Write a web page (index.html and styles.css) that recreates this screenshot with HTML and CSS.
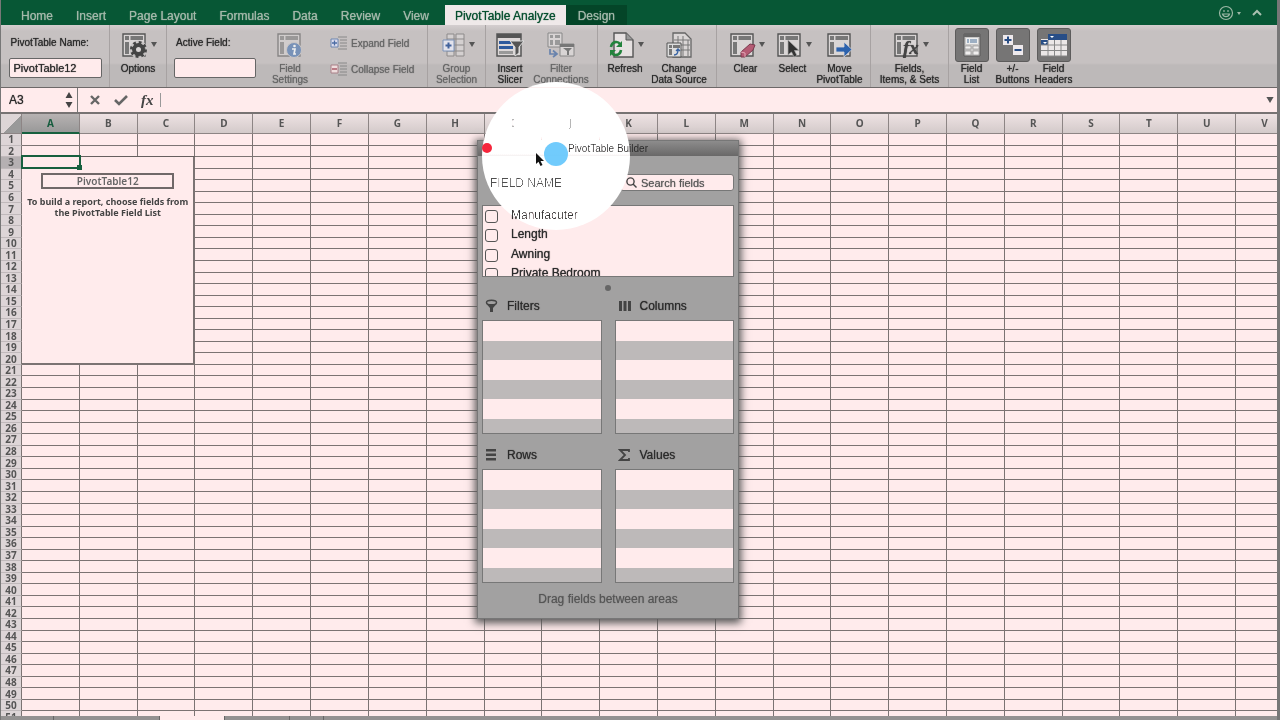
FILE: index.html
```html
<!DOCTYPE html>
<html lang="en">
<head>
<meta charset="utf-8">
<title>PivotTable Analyze</title>
<link rel="stylesheet" href="styles.css">
</head>
<body>
<svg class="defs" aria-hidden="true">
  <symbol id="grid" viewBox="0 0 24 26"><path d="M1 2h22v22H1z" fill="#d9d5d5" stroke="#555" stroke-width="1.4"/><path d="M3 4h4v4H3zM8.500 4H21v4H8.500zM3 10h4v12H3z" fill="#777"/></symbol>
  <symbol id="caret" viewBox="0 0 6 5"><path d="M0 0h6L3 5z" fill="#555"/></symbol>
</svg>
<div class="app">
  <header class="tabs">
    <nav class="tab-list">
      <a class="tab" href="#">Home</a><a class="tab" href="#">Insert</a><a class="tab" href="#">Page Layout</a><a class="tab" href="#">Formulas</a><a class="tab" href="#">Data</a><a class="tab" href="#">Review</a><a class="tab" href="#">View</a><a class="tab active" href="#">PivotTable Analyze</a><a class="tab design" href="#">Design</a>
    </nav>
    <div class="tab-tools">
      <button class="plain" aria-label="Feedback"><svg width="24" height="16" viewBox="0 0 24 16" fill="none" stroke="#9db8a6" stroke-width="1.2"><circle cx="8" cy="8" r="6.500"/><path d="M4.500 9c1 3.500 6 3.500 7 0z"/><path d="M6 5v2M10 5v2"/><path d="M19 7h4l-2 3z" fill="#9db8a6" stroke="none"/></svg></button>
      <button class="plain" aria-label="Collapse ribbon"><svg width="10" height="8" viewBox="0 0 10 8" fill="none" stroke="#a9c0b0" stroke-width="2"><path d="M1 6l4-4 4 4"/></svg></button>
    </div>
  </header>

  <section class="ribbon">
    <div class="group name-group">
      <div class="stack"><label for="ptname">PivotTable Name:</label><input id="ptname" value="PivotTable12"></div>
    </div>
    <div class="group options-group">
      <button class="tool"><span class="pic menu"><svg width="26" height="26" viewBox="0 0 26 26"><use href="#grid" width="24" height="26"/><circle cx="16.500" cy="17.500" r="8" fill="none" stroke="#c9c5c5" stroke-width="2"/><circle cx="16.500" cy="17.500" r="4.500" fill="#d9d5d5" stroke="#444" stroke-width="4"/><circle cx="16.500" cy="17.500" r="7" fill="none" stroke="#444" stroke-width="3" stroke-dasharray="2.700 2.800"/></svg><svg class="caret"><use href="#caret"/></svg></span><span>Options</span></button>
    </div>
    <div class="group field-group">
      <div class="stack"><label for="actfield">Active Field:</label><input id="actfield"></div>
      <button class="tool dim"><span class="pic"><svg width="26" height="26" viewBox="0 0 26 26"><g opacity=".55"><use href="#grid" width="24" height="26"/></g><circle cx="17" cy="18" r="7.500" fill="#7892b8" stroke="#c9c5c5"/><circle cx="17.500" cy="14" r="1.300" fill="#eee"/><path d="M15 17h3l-1 5h2" fill="none" stroke="#eee" stroke-width="1.700"/></svg></span><span>Field<br>Settings</span></button>
      <div class="mini-stack">
        <button class="mini"><svg width="18" height="16" viewBox="0 0 18 16"><path d="M8 2h9M10 5h7M10 8h7M10 11h7M8 14h9" stroke="#888"/><path d="M1 4h7v8H1z" fill="#dde" stroke="#6d86b0"/><path d="M4.500 5.500v5M2 8h5" stroke="#4b6ca4" stroke-width="1.300"/></svg>Expand Field</button>
        <button class="mini"><svg width="18" height="16" viewBox="0 0 18 16"><path d="M8 2h9M10 5h7M10 8h7M10 11h7M8 14h9" stroke="#888"/><path d="M1 4h7v8H1z" fill="#edd" stroke="#a98088"/><path d="M2 8h5" stroke="#a04455" stroke-width="1.300"/></svg>Collapse Field</button>
      </div>
    </div>
    <div class="group selection-group">
      <button class="tool dim"><span class="pic menu"><svg width="24" height="26" viewBox="0 0 24 26"><path d="M5 2h7v22H5zM14 2h8v22h-8zM5 7h17M5 13h17M5 19h17" fill="#d4d0d0" stroke="#8d8a8a"/><path d="M1 8h11v11H1z" fill="#e3e3ec" stroke="#7d93b8"/><path d="M6.500 10.500v6M3.500 13.500h6" stroke="#41629c" stroke-width="2"/></svg><svg class="caret"><use href="#caret"/></svg></span><span>Group<br>Selection</span></button>
    </div>
    <div class="group slicer-group">
      <button class="tool"><span class="pic"><svg width="28" height="26" viewBox="0 0 28 26"><path d="M1 2h24v22H1z" fill="#ddd8d8" stroke="#555" stroke-width="1.500"/><path d="M1 2h24v4H1z" fill="#555"/><path d="M3 9h12v3H3zM3 14h14v3H3z" fill="#2f5a9d"/><path d="M3 19h14v3H3z" fill="#999"/><path d="M14 9h14l-5 6v6l-4 3v-9z" fill="#555" stroke="#ddd"/></svg></span><span>Insert<br>Slicer</span></button>
      <button class="tool dim wide"><span class="pic"><svg width="28" height="26" viewBox="0 0 28 26"><path d="M1 1h14v14H1z" fill="#d8d4d4" stroke="#888"/><path d="M3 3h3v3H3zM8 3h5v3H8zM3 8h3v5H3zM8 8h5v5H8z" fill="#999"/><path d="M13 12h14v12H13z" fill="#d8d4d4" stroke="#888"/><path d="M13 12h14v3H13zM16 16h9l-3 3v4h-2v-4z" fill="#777"/><path d="M3 17v5h6M6 18.500l4 3.500-4 3" fill="none" stroke="#6983ad" stroke-width="1.700"/></svg></span><span>Filter<br>Connections</span></button>
    </div>
    <div class="group refresh-group">
      <button class="tool"><span class="pic menu"><svg width="26" height="26" viewBox="0 0 26 26"><path d="M5 1h12l7 7v17H5z" fill="#e6e1e1" stroke="#555" stroke-width="1.400"/><path d="M17 1v7h7" fill="#999" stroke="#555"/><path d="M2 15c1-6 7-6 9-3M12 18c-1 6-7 6-9 3" fill="none" stroke="#23833c" stroke-width="2.600"/><path d="M13 9v6H7zM1 24v-6h6z" fill="#23833c"/></svg><svg class="caret"><use href="#caret"/></svg></span><span>Refresh</span></button>
      <button class="tool wide"><span class="pic"><svg width="26" height="26" viewBox="0 0 26 26"><path d="M7 1h12l6 6v18H7z" fill="#dad6d6" stroke="#666" stroke-width="1.300"/><path d="M12 4v20M17 4v20M22 8v16M8 8h16M8 13h16M8 18h16" stroke="#777"/><path d="M1 11h14v14H1z" fill="#ddd" stroke="#555"/><path d="M3 13h3v3H3zM7 13h7v3H7zM3 17h3v6H3z" fill="#777"/><path d="M8 23q4 0 4-5M10 19l2-2 2 2" fill="none" stroke="#3661a2" stroke-width="1.400"/></svg></span><span>Change<br>Data Source</span></button>
    </div>
    <div class="group actions-group">
      <button class="tool"><span class="pic menu"><svg width="26" height="26" viewBox="0 0 26 26"><use href="#grid" width="24" height="26"/><path d="M11 20l9-8 5 1-2 5-8 7h-4z" fill="#b55b74" stroke="#783a4d"/><path d="M11 20l4 1v4" fill="none" stroke="#e3a8b6"/></svg><svg class="caret"><use href="#caret"/></svg></span><span>Clear</span></button>
      <button class="tool"><span class="pic menu"><svg width="26" height="26" viewBox="0 0 26 26"><use href="#grid" width="24" height="26"/><path d="M11 8v15l3.500-3 2.500 5 3-1.500-2.500-5H22z" fill="#333" stroke="#aaa" stroke-width=".7"/></svg><svg class="caret"><use href="#caret"/></svg></span><span>Select</span></button>
      <button class="tool"><span class="pic"><svg width="26" height="26" viewBox="0 0 26 26"><use href="#grid" width="24" height="26"/><path d="M9 15h8v-5l8 7.500-8 7.500v-5H9z" fill="#2c62ad" stroke="#d5d3d6" stroke-width=".8"/></svg></span><span>Move<br>PivotTable</span></button>
    </div>
    <div class="group fields-group">
      <button class="tool"><span class="pic menu"><svg width="26" height="26" viewBox="0 0 26 26"><use href="#grid" width="24" height="26"/><text x="9" y="22" class="fx-icon">fx</text></svg><svg class="caret"><use href="#caret"/></svg></span><span>Fields,<br>Items, &amp; Sets</span></button>
    </div>
    <div class="group show-group">
      <button class="tool" aria-pressed="true"><span class="pic pressed"><svg width="18" height="24" viewBox="0 0 18 24"><path d="M1 1h16v22H1z" fill="#c9c8c8" stroke="#5b5b5b"/><path d="M1 1h16v3H1z" fill="#666"/><path d="M3 5h12v6H3z" fill="#eee"/><path d="M4 7h2M7 7h7M4 9h2M7 9h7" stroke="#4d7198"/><path d="M2 13h6v3H2zM10 13h6v3h-6zM2 18h6v4H2zM10 18h6v4h-6z" fill="#f0eeee" stroke="#888" stroke-width=".6"/></svg></span><span>Field<br>List</span></button>
      <button class="tool" aria-pressed="true"><span class="pic pressed"><svg width="22" height="22" viewBox="0 0 22 22"><path d="M1 1h10v10H1zM11 11h10v10H11z" fill="#eee9ec"/><path d="M6 2.500v7M2.500 6h7M12.500 16h7" stroke="#284d84" stroke-width="2"/></svg></span><span>+/-<br>Buttons</span></button>
      <button class="tool" aria-pressed="true"><span class="pic pressed"><svg width="28" height="24" viewBox="0 0 28 24"><path d="M1 6h26v17H1z" fill="#ebe7e7"/><path d="M8 1h19v6H8zM1 7h7v5H1z" fill="#284e87"/><path d="M10 3h4l-2 2zM3 9h4l-2 2z" fill="#fff"/><path d="M8 7v16M14.500 7v16M21 7v16M1 12h26M1 17.500h26M1 23h26" stroke="#888"/></svg></span><span>Field<br>Headers</span></button>
    </div>
  </section>

  <section class="formula-bar">
    <input class="name-box" aria-label="Name box" value="A3">
    <svg class="stepper" width="8" height="16" viewBox="0 0 8 16"><path d="M4 0l3.500 6h-7zM4 16l3.500-6h-7z" fill="#444"/></svg>
    <div class="formula-tools">
      <button class="plain" aria-label="Cancel"><svg width="12" height="12" viewBox="0 0 12 12"><path d="M2 2l8 8M10 2l-8 8" stroke="#666" stroke-width="2.400"/></svg></button>
      <button class="plain" aria-label="Enter"><svg width="14" height="12" viewBox="0 0 14 12"><path d="M1 6l4 4 8-8" fill="none" stroke="#666" stroke-width="2.600"/></svg></button>
      <button class="plain fx">fx</button>
    </div>
    <input class="formula" aria-label="Formula">
    <button class="plain" aria-label="Expand formula bar"><svg width="8" height="6"><use href="#caret"/></svg></button>
  </section>

  <main class="sheet">
    <table class="cells"><thead></thead><tbody></tbody></table>
  </main>
  <footer class="sheet-tabs"><span></span><span></span><span class="current"></span><span></span><span></span></footer>
</div>

<aside class="builder">
  <h2>PivotTable Builder</h2>
  <div class="builder-body">
    <div class="search-row">
      <h3>FIELD NAME</h3>
      <label class="search"><svg width="11" height="11" viewBox="0 0 11 11" fill="none" stroke="#444" stroke-width="1.400"><circle cx="4.500" cy="4.500" r="3.600"/><path d="M7 7l3.500 3.500"/></svg><input aria-label="Search fields" placeholder="Search fields"></label>
    </div>
    <ul class="fields">
      <li><label><input type="checkbox">Manufacuter</label></li>
      <li><label><input type="checkbox">Length</label></li>
      <li><label><input type="checkbox">Awning</label></li>
      <li><label><input type="checkbox">Private Bedroom</label></li>
    </ul>
    <div class="grip"></div>
    <div class="areas">
      <section><h4><svg width="13" height="14" viewBox="0 0 13 14"><ellipse cx="6.500" cy="3.500" rx="5" ry="2.300" fill="none" stroke="#444" stroke-width="1.500"/><path d="M1 4.500q5.500 3 11 0L8 9v4H5V9z" fill="#444"/></svg>Filters</h4><div class="drop"></div></section>
      <section><h4><svg width="13" height="14" viewBox="0 0 13 14"><path d="M1 2h3v10H1zM5.500 2h3v10h-3zM10 2h3v10h-3z" fill="#444"/></svg>Columns</h4><div class="drop"></div></section>
      <section><h4><svg width="13" height="14" viewBox="0 0 13 14"><path d="M1 1h10v2.500H1zM1 5.500h10V8H1zM1 10h10v2.500H1z" fill="#444"/></svg>Rows</h4><div class="drop"></div></section>
      <section><h4><svg width="13" height="14" viewBox="0 0 13 14"><path d="M11 4V2H2l5 5-5 5h9v-2" fill="none" stroke="#444" stroke-width="1.800"/></svg>Values</h4><div class="drop"></div></section>
    </div>
    <p class="hint">Drag fields between areas</p>
  </div>
</aside>
<div class="spotlight"></div>
<div class="close-dot"></div>
<div class="click-dot"></div>
<svg class="pointer" width="10" height="14" viewBox="0 0 10 14"><path d="M1 0v11l2.500-2.200L5.500 13l2-1-2-4H9z" fill="#111"/></svg>
<script src="script.js"></script>
</body>
</html>
```

FILE: styles.css
```css
* { box-sizing: border-box; }
body { margin: 0; overflow: hidden; background: #777; color: #2b2b2b; font: 10px/11px "Liberation Sans", Arial, sans-serif; }
button, input { font: inherit; color: inherit; }
a { color: inherit; text-decoration: none; }
h2, h3, h4, p, ul { margin: 0; padding: 0; font-weight: normal; }
.defs { display: none; }
.plain { border: 0; background: none; padding: 0; display: flex; }
.caret { width: 6px; height: 5px; }
.app { height: 100vh; margin: 0 3px 0 1px; display: flex; flex-direction: column; background: #ffebec; }

.tabs { height: 25px; flex: none; display: flex; justify-content: space-between; align-items: flex-end; background: #075735; padding: 0 15px 0 9px; }
.tab-list { display: flex; }
.tab { height: 20px; padding: 0 12px 0 11px; font-size: 12px; line-height: 22px; color: #a3b8aa; text-shadow: 0 0 1px #a3b8aa; }
.tab.active { background: #efe9e9; color: #07502f; text-shadow: 0 0 1px #07502f; padding: 0 10px; margin-left: 4px; }
.tab.design { background: #044528; padding: 0 12px; }
.tab-tools { display: flex; align-items: center; gap: 10px; height: 24px; }

.ribbon { height: 63px; flex: none; display: flex; background: linear-gradient(#d4cecf 0, #c6c1c1 6px, #c6c1c1 38px, #bdb9b9 40px, #bdb9b9); border-bottom: 1px solid #6c6868; text-shadow: 0 0 1px currentColor; }
.group { display: flex; align-items: flex-start; justify-content: center; padding-top: 3px; border-right: 1px solid #a7a2a2; }
.group:last-child { border: 0; }
.name-group { width: 109px; }
.options-group { width: 57px; }
.field-group { width: 261px; justify-content: flex-start; padding-left: 7px; }
.selection-group { width: 58px; }
.slicer-group { width: 112px; justify-content: flex-start; }
.refresh-group { width: 119px; justify-content: flex-start; padding-left: 3px; }
.actions-group { width: 154px; justify-content: flex-start; padding-left: 5px; }
.fields-group { width: 78px; }
.show-group { width: 132px; justify-content: flex-start; padding-left: 2px; }
.stack { display: flex; flex-direction: column; gap: 10px; padding-top: 9px; }
.stack label { padding-left: 2px; }
.stack input { width: 93px; height: 20px; padding: 0 4px; border: 1px solid #666; border-radius: 2px; background: #ffebec; font-size: 11px; text-shadow: inherit; }
.field-group .stack input { width: 82px; }
.tool { width: 48px; padding: 0; border: 0; background: none; display: flex; flex-direction: column; align-items: center; gap: 1px; text-shadow: inherit; white-space: nowrap; }
.field-group .tool { width: 68px; }
.tool.wide { width: 54px; }
.refresh-group .tool.wide { width: 60px; }
.actions-group .tool { width: 47px; }
.show-group .tool { width: 41px; }
.dim, .mini { color: #666; }
.pic { position: relative; height: 34px; display: flex; align-items: center; justify-content: center; }
.pic.menu { margin-right: 6px; }
.pic .caret { position: absolute; right: -9px; top: 14px; }
.pic.pressed { width: 34px; background: #767575; border: 1px solid #5d5c5c; border-radius: 3px; }
.mini-stack { display: flex; flex-direction: column; gap: 10px; padding: 7px 0 0 6px; }
.mini { border: 0; background: none; padding: 0; display: flex; align-items: center; gap: 3px; text-shadow: inherit; }
.fx-icon { font: italic bold 19px "Liberation Serif", serif; fill: #444; }

.formula-bar { height: 26px; flex: none; display: flex; align-items: center; border-bottom: 2px solid #777373; padding-right: 3px; }
.name-box { width: 64px; height: 22px; border: 0; background: none; padding: 0 8px; font-size: 12px; text-shadow: 0 0 1px #333; }
.stepper { margin-right: 4px; }
.formula-tools { display: flex; align-items: center; gap: 13px; align-self: stretch; padding: 0 6px 0 11px; border-left: 1px solid #777; }
.fx { font: italic bold 15px/16px "Liberation Serif", serif; color: #444; }
.formula { flex: 1; height: 14px; border: 0; border-left: 1px solid #999; background: none; }

.sheet { flex: 1; min-height: 0; overflow: hidden; }
.cells { table-layout: fixed; width: calc(100% + 17px); height: 609px; border-spacing: 0; }
.cells th, .cells td { padding: 0; border: solid #7b7373; border-width: 0 1px 1px 0; }
.cells th { font: bold 10px/10px "Noto Sans", sans-serif; color: #555; }
.cells thead tr { height: 20px; }
.cells thead th { background: linear-gradient(#eee2e3, #d3caca); border-color: #8d8585; padding-bottom: 1px; }
.cells thead th.on { background: linear-gradient(#b7b2b2, #999); color: #165c3e; border-bottom: 2px solid #17603f; padding-bottom: 0; }
.cells th.corner { width: 21px; background: linear-gradient(135deg, #ddd5d6 55%, #999 55%); }
.cells tbody th { background: #ddd5d7; border-bottom-color: #c0b9bb; text-align: center; }
.cells tbody th.on { background: #b5b0b2; }
.cells td.report { vertical-align: top; position: relative; border-width: 0 2px 2px 0; box-shadow: 0 -1px #665f5f; }
.report-box { display: flex; flex-direction: column; align-items: center; gap: 7px; padding-top: 16px; font: bold 9px/11px "Noto Sans", sans-serif; color: #444; text-align: center; white-space: nowrap; }
.report-name { width: 133px; border: 2px solid #706868; line-height: 12px; font-size: 10px; font-weight: 600; color: #666; }
.selection { position: absolute; left: -1px; top: -2px; width: 60px; height: 14px; border: 2px solid #17603f; }
.selection::after { content: ""; position: absolute; right: -3px; bottom: -3px; width: 5px; height: 5px; background: #17603f; }
.sheet-tabs { height: 4px; flex: none; display: flex; background: #939191; }
.sheet-tabs span { width: 53px; border-right: 1px solid #666; }
.sheet-tabs span + span { width: 106px; }
.sheet-tabs .current + span, .sheet-tabs span.current { width: 65px; }
.sheet-tabs .current { background: #ffebec; }
.sheet-tabs span:last-child { width: 34px; }

.builder { position: absolute; left: 477px; top: 140px; width: 262px; background: #a2a1a1; border: 1px solid #777; box-shadow: 0 2px 8px 2px #555; font-size: 12px; line-height: 14px; }
.builder h2 { height: 15px; line-height: 16px; font-size: 10px; text-align: center; background: linear-gradient(#8d8c8c, #696868); color: #2b2b2b; }
.builder-body { padding: 18px 4px 12px; }
.search-row { display: flex; justify-content: space-between; align-items: center; padding-left: 8px; }
.search-row h3 { font-size: 12px; color: #333; }
.search { width: 114px; height: 17px; display: flex; align-items: center; gap: 4px; padding-left: 5px; background: #ffebec; border: 1px solid #777; border-radius: 3px; }
.search input { width: 80px; padding: 0; border: 0; background: none; font-size: 11px; }
.search input::placeholder { color: #555; opacity: 1; text-shadow: 0 0 1px #777; }
.fields { list-style: none; height: 72px; margin-top: 14px; overflow: hidden; background: #ffebec; border: 1px solid #777; }
.fields li { height: 19px; padding: 1px 2px 0; }
.fields li:nth-child(even) { height: 20px; }
.fields label { height: 15px; display: flex; align-items: center; gap: 13px; text-shadow: 0 0 1px #333; }
.fields input { appearance: none; flex: none; width: 13px; height: 13px; margin: 3px 0 0; border: 1px solid #555; border-radius: 3px; }
.grip { width: 6px; height: 6px; margin: 8px auto 0; border-radius: 3px; background: #666; }
.areas { display: grid; grid-template-columns: 1fr 1fr; gap: 14px 13px; padding-top: 8px; }
.areas h4 { height: 20px; display: flex; align-items: center; gap: 9px; padding: 0 0 6px 3px; margin-bottom: 1px; text-shadow: 0 0 1px #333; }
.drop { height: 114px; border: 1px solid #777; background: repeating-linear-gradient(#ffebec 0 20px, #bdb9b9 20px 39px); }
.hint { text-align: center; margin-top: 9px; color: #555; text-shadow: 0 0 1px #666; }

.spotlight { position: absolute; left: 482px; top: 82px; width: 148px; height: 148px; border-radius: 50%; backdrop-filter: brightness(1.9) contrast(1.6); pointer-events: none; }
.close-dot { position: absolute; left: 482px; top: 143px; width: 10px; height: 10px; border-radius: 50%; background: #f5263c; }
.click-dot { position: absolute; left: 544px; top: 142px; width: 24px; height: 24px; border-radius: 50%; background: #58c2fbd9; }
.pointer { position: absolute; left: 535px; top: 153px; }
```

FILE: script.js
```js
const head = document.querySelector(".cells thead");
const body = document.querySelector(".cells tbody");
const letters = "ABCDEFGHIJKLMNOPQRSTUV".split("");

head.innerHTML = '<tr><th class="corner"></th>' +
  letters.map((c) => `<th${c === "A" ? ' class="on"' : ""}>${c}</th>`).join("") + "</tr>";

const report = `<td class="report" colspan="3" rowspan="18"><div class="selection"></div>
  <div class="report-box"><div class="report-name">PivotTable12</div>
  <div>To build a report, choose fields from<br>the PivotTable Field List</div></div></td>`;

let rows = "";
for (let r = 1; r <= 51; r++) {
  const covered = r >= 3 && r <= 20;
  rows += `<tr><th${r === 3 ? ' class="on"' : ""}>${r}</th>` + (r === 3 ? report : "") +
    "<td></td>".repeat(letters.length - (covered ? 3 : 0)) + "</tr>";
}
body.innerHTML = rows;
```
